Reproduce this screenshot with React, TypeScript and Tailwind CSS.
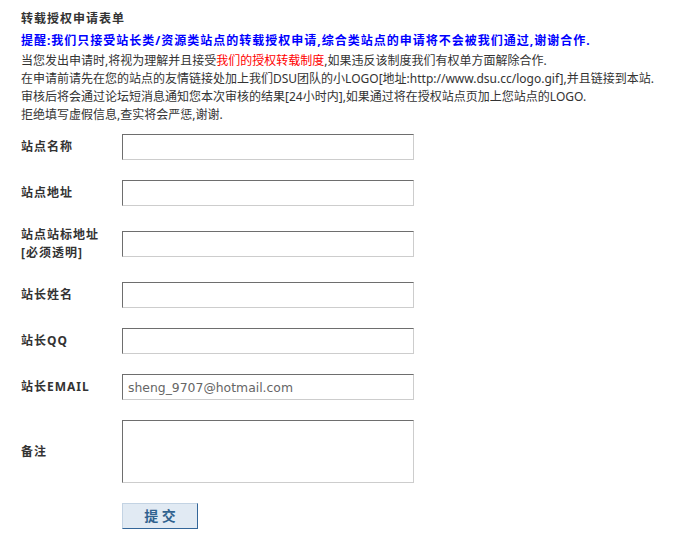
import React from 'react';

const fields = [
  { label: '站点名称' },
  { label: '站点地址' },
  { label: '站点站标地址', sub: '[必须透明]' },
  { label: '站长姓名' },
  { label: '站长QQ' },
  { label: '站长EMAIL', value: 'sheng_9707@hotmail.com' },
];

const inputBox =
  'w-[292px] border border-t-[#6e6e6e] border-l-[#6e6e6e] border-b-[#cdcdcd] border-r-[#cdcdcd] bg-white outline-none';

export default function App() {
  return (
    <div className="min-h-screen bg-white px-[21px] pt-[10px] font-['Tahoma','Noto_Sans','Noto_Sans_CJK_SC',sans-serif] text-[12px] leading-[18px] text-[#333]">
      {/* Header */}
      <h1 className="font-bold tracking-[1px]">转载授权申请表单</h1>
      <p className="mt-[4px] font-bold tracking-[1px] text-[#0000ff]">
        提醒:我们只接受站长类/资源类站点的转载授权申请,综合类站点的申请将不会被我们通过,谢谢合作.
      </p>
      <div className="mt-[2px]">
        <p>
          当您发出申请时,将视为理解并且接受<span className="text-[#ff0000]">我们的授权转载制度</span>
          ,如果违反该制度我们有权单方面解除合作.
        </p>
        <p>在申请前请先在您的站点的友情链接处加上我们DSU团队的小LOGO[地址:http://www.dsu.cc/logo.gif],并且链接到本站.</p>
        <p>审核后将会通过论坛短消息通知您本次审核的结果[24小时内],如果通过将在授权站点页加上您站点的LOGO.</p>
        <p>拒绝填写虚假信息,查实将会严惩,谢谢.</p>
      </div>

      {/* Form */}
      <form className="flex flex-col">
        {fields.map((f) => (
          <div key={f.label} className="flex items-center py-[10px]">
            <div className="w-[101px] font-bold tracking-[1px]">
              <div>{f.label}</div>
              {f.sub && <div>{f.sub}</div>}
            </div>
            <input
              type="text"
              defaultValue={f.value}
              className={`${inputBox} h-[26px] pl-[5px] font-['DejaVu_Sans',sans-serif] text-[12.4px] text-[#666]`}
            />
          </div>
        ))}
        <div className="flex items-center py-[10px]">
          <div className="w-[101px] font-bold tracking-[1px]">备注</div>
          <textarea className={`${inputBox} h-[63px] resize-none`} />
        </div>
        <div className="flex py-[10px] pl-[101px]">
          <button
            type="button"
            className="h-[26px] w-[76px] border border-t-[#c3d3e3] border-l-[#c3d3e3] border-b-[#336699] border-r-[#336699] bg-[#e1eaf3] text-[14px] font-bold leading-[24px] text-[#30628f]"
          >
            提 交
          </button>
        </div>
      </form>
    </div>
  );
}
